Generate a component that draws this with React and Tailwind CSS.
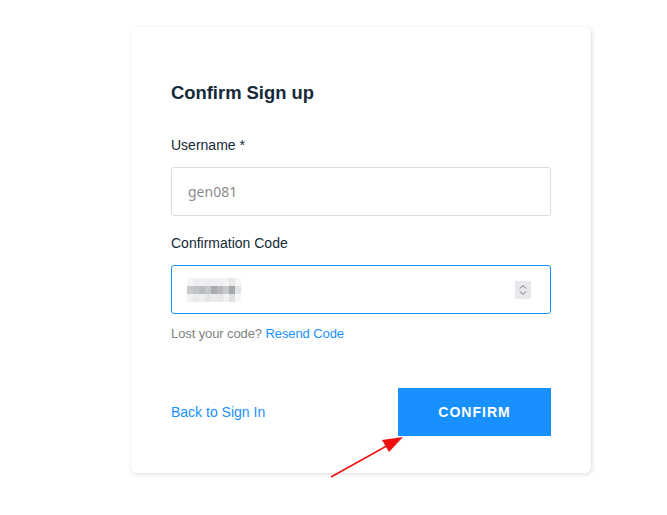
import React from 'react';

const blur = [
  ['#f4f4f5', '#eeeff1', '#f1f1f3', '#eeeef0', '#f0f0f2', '#eff0f1', '#f3f3f4', '#e6e7e9', '#f6f6f7'],
  ['#c9cacd', '#c2c4c8', '#b9bcc1', '#c4c6ca', '#a9acb3', '#b6b8bd', '#c7c8cc', '#a5a8ae', '#e2e3e5'],
  ['#f2f2f3', '#e9eaec', '#eeeff0', '#e4e5e7', '#ebebed', '#e7e8ea', '#f0f0f1', '#dfe0e2', '#f7f7f8'],
];

const App = () => {
  return (
    <div className="relative w-[667px] h-[515px] bg-white overflow-hidden" style={{ fontFamily: '"Liberation Sans", Arial, sans-serif' }}>
      <div className="ml-[131px] mt-[27px] w-[460px] rounded-[6px] bg-white shadow-[1px_1px_4px_0_rgba(0,0,0,0.15)] px-10 pt-[54px] pb-[37px]">
        <h1 className="text-[18.4px] leading-6 font-bold text-[#152939]">Confirm Sign up</h1>

        <div className="mt-[30px] text-[14px] leading-5 text-[#152939]">Username *</div>
        <div className="mt-[12px] h-[49px] border border-[#dcdcdc] rounded-[3px] flex items-center px-4">
          <span className="text-[14px] text-[#8a8a8a]" style={{ fontFamily: '"Noto Sans", sans-serif' }}>gen081</span>
        </div>

        <div className="mt-[17px] text-[14px] leading-5 text-[#152939]">Confirmation Code</div>
        <div className="mt-3 h-[49px] border border-[#1890ff] rounded-[3px] flex items-center pl-[15px] pr-[19px]">
          <div className="flex flex-col">
            {blur.map((row, i) => (
              <div key={i} className="flex">
                {row.map((c, j) => (
                  <div key={j} className="w-[6px] h-2" style={{ background: c }} />
                ))}
              </div>
            ))}
          </div>
          <div className="ml-auto w-[16px] h-[18px] bg-[#e9e9ed] flex flex-col items-center justify-center gap-[2px]">
            <svg width="8" height="5" viewBox="0 0 8 5"><path d="M1 4.5 L4 1.5 L7 4.5" stroke="#6b6b70" strokeWidth="1" fill="none" /></svg>
            <svg width="8" height="5" viewBox="0 0 8 5"><path d="M1 0.5 L4 3.5 L7 0.5" stroke="#6b6b70" strokeWidth="1" fill="none" /></svg>
          </div>
        </div>
        <div className="mt-[11px] text-[13px] leading-[18px] text-[#828282] tracking-[-0.1px]">
          Lost your code? <span className="text-[#1890ff]">Resend Code</span>
        </div>

        <div className="mt-[45px] flex items-center justify-between">
          <span className="text-[14px] text-[#1890ff]">Back to Sign In</span>
          <button className="w-[153px] h-[48px] bg-[#1890ff] text-white text-[14px] font-bold tracking-[1px]">CONFIRM</button>
        </div>
      </div>

      <svg className="absolute left-0 top-0" width="667" height="515">
        <line x1="331" y1="477" x2="392" y2="443" stroke="#ee1111" strokeWidth="1.5" />
        <polygon points="403,437 389,452 382,440" fill="#ee1111" />
      </svg>
    </div>
  );
};

export default App;
